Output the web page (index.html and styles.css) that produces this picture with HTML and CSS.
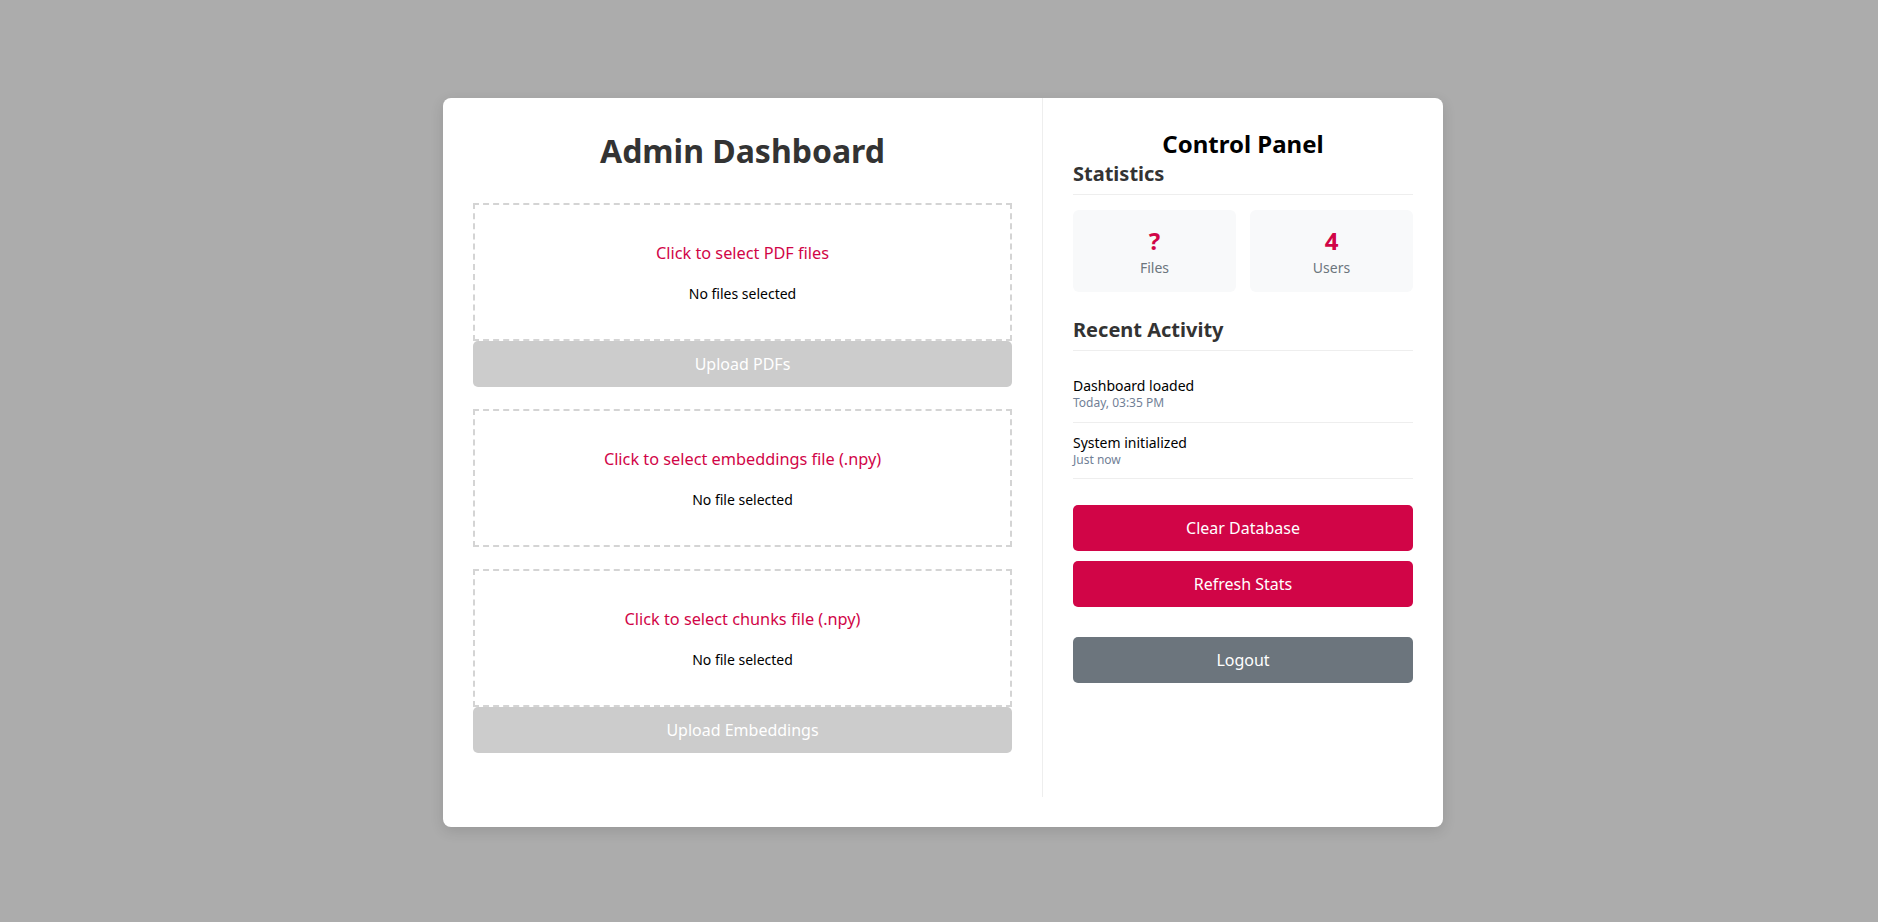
FILE: index.html
```html
<!DOCTYPE html>
<html lang="en">
<head>
<meta charset="utf-8">
<title>Admin Dashboard</title>
<link rel="stylesheet" href="styles.css">
</head>
<body>
<div class="page">
  <div class="card">
    <main class="main">
      <h1 class="title">Admin Dashboard</h1>
      <div class="upload-group">
        <div class="dropzone">
          <span class="dz-label">Click to select PDF files</span>
          <p class="dz-status">No files selected</p>
        </div>
        <button class="btn-upload" disabled>Upload PDFs</button>
      </div>
      <div class="upload-group">
        <div class="dropzone dropzone-spaced">
          <span class="dz-label">Click to select embeddings file (.npy)</span>
          <p class="dz-status">No file selected</p>
        </div>
        <div class="dropzone">
          <span class="dz-label">Click to select chunks file (.npy)</span>
          <p class="dz-status">No file selected</p>
        </div>
        <button class="btn-upload" disabled>Upload Embeddings</button>
      </div>
    </main>
    <aside class="sidebar">
      <h2 class="side-title">Control Panel</h2>
      <h3 class="section-title">Statistics</h3>
      <div class="stats">
        <div class="stat">
          <div class="stat-value">?</div>
          <div class="stat-label">Files</div>
        </div>
        <div class="stat">
          <div class="stat-value">4</div>
          <div class="stat-label">Users</div>
        </div>
      </div>
      <h3 class="section-title">Recent Activity</h3>
      <ul class="activity">
        <li class="activity-item">
          <div class="activity-text">Dashboard loaded</div>
          <div class="activity-time">Today, 03:35 PM</div>
        </li>
        <li class="activity-item">
          <div class="activity-text">System initialized</div>
          <div class="activity-time">Just now</div>
        </li>
      </ul>
      <div class="actions">
        <button class="btn btn-danger">Clear Database</button>
        <button class="btn btn-danger">Refresh Stats</button>
        <button class="btn btn-secondary btn-logout">Logout</button>
      </div>
    </aside>
  </div>
</div>
</body>
</html>
```
FILE: styles.css
```css
* {
  box-sizing: border-box;
}

html, body {
  margin: 0;
  padding: 0;
}

body {
  background: #acacac;
  font-family: "Noto Sans", "Open Sans", sans-serif;
  color: #333;
}

.page {
  display: flex;
  justify-content: center;
  padding: 98px 0 0 8px;
  min-height: 922px;
}

.card {
  width: 1000px;
  height: 729px;
  background: #fff;
  border-radius: 8px;
  box-shadow: 0 4px 14px rgba(0, 0, 0, 0.12);
  display: flex;
  align-items: flex-start;
}

.main {
  flex: 1;
  padding: 31px 30px 44px 30px;
}

.title {
  margin: 0 0 30px;
  text-align: center;
  font-size: 32px;
  font-weight: 700;
  line-height: 44px;
  color: #333;
}

.upload-group {
  margin-bottom: 22px;
}

.dropzone {
  border: 2px dashed #d4d4d4;
  padding: 36px 20px;
  text-align: center;
  height: 138px;
}

.dropzone-spaced {
  margin-bottom: 22px;
}

.dz-label {
  display: block;
  color: #d10547;
  font-size: 16.3px;
  line-height: 24px;
}

.dz-status {
  margin: 19px 0 0;
  font-size: 14px;
  line-height: 19px;
  color: #000;
}

.btn-upload {
  display: block;
  width: 100%;
  height: 46px;
  border: none;
  border-radius: 5px;
  background: #cccccc;
  color: #fff;
  font-family: inherit;
  font-size: 16px;
}

.sidebar {
  width: 401px;
  align-self: stretch;
  margin-bottom: 30px;
  border-left: 1px solid #eeeeee;
  padding: 30px 30px;
}

.side-title {
  margin: 0;
  text-align: center;
  font-size: 24px;
  line-height: 32.2px;
  font-weight: 700;
  color: #000;
}

.section-title {
  margin: 0 0 15px;
  padding-bottom: 7px;
  border-bottom: 1px solid #eeeeee;
  font-size: 20px;
  line-height: 27.2px;
  font-weight: 700;
  color: #333;
}

.stats {
  display: grid;
  grid-template-columns: 1fr 1fr;
  gap: 14px;
  margin-bottom: 24px;
}

.stat {
  background: #f8f9fa;
  border-radius: 6px;
  padding: 15px 10px;
  text-align: center;
}

.stat-value {
  font-size: 24px;
  line-height: 32.7px;
  font-weight: 700;
  color: #d10547;
}

.stat-label {
  font-size: 14px;
  line-height: 19px;
  color: #6c757d;
}

.activity {
  list-style: none;
  margin: 0 0 26px;
  padding: 0;
}

.activity-item {
  padding: 10px 0;
  border-bottom: 1px solid #eeeeee;
}

.activity-text {
  font-size: 14px;
  line-height: 19px;
  color: #000;
}

.activity-time {
  font-size: 12px;
  line-height: 16.3px;
  color: #718096;
}

.actions {
  display: flex;
  flex-direction: column;
  gap: 10px;
}

.btn {
  display: block;
  width: 100%;
  height: 46px;
  border: none;
  border-radius: 5px;
  color: #fff;
  font-family: inherit;
  font-size: 16px;
}

.btn-danger {
  background: #d10547;
}

.btn-secondary {
  background: #6c757d;
}

.btn-logout {
  margin-top: 20px;
}
```
